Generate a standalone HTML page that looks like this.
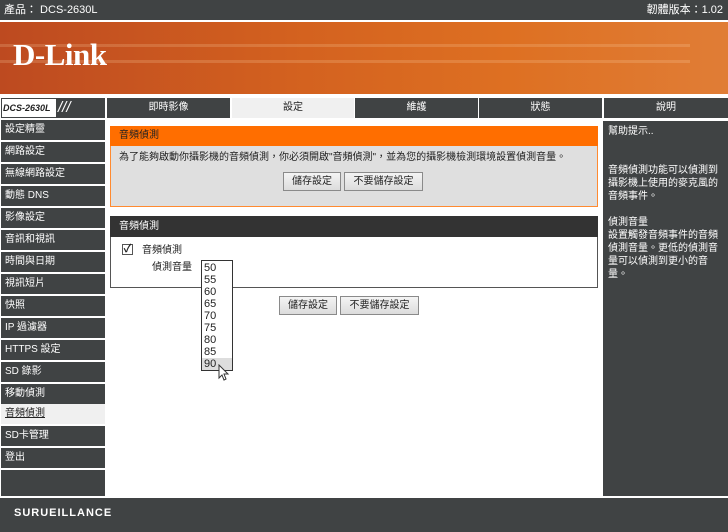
<!DOCTYPE html>
<html><head><meta charset="utf-8"><style>
*{margin:0;padding:0;box-sizing:border-box}
body{width:728px;height:532px;background:#fff;position:relative;overflow:hidden;font-family:"Liberation Sans","Noto Sans CJK TC",sans-serif;font-size:10px;color:#222;line-height:12px}
.a{position:absolute}
.dk{background:#404344;color:#fff}
.side div{position:absolute;left:1px;width:104px;height:20px;background:#404344;color:#fff;padding-left:4px;font-size:10px;line-height:20px}
.tab{position:absolute;top:98px;height:20px;background:#404344;color:#fff;text-align:center;font-size:10px;line-height:20px}
.btn{position:absolute;height:19px;background:linear-gradient(#f4f4f4,#dcdcdc);border:1px solid #8a8a8a;font-size:10px;text-align:center;line-height:17px;color:#222}
.opt{height:12px;line-height:12px;font-size:11px;padding-left:2px;color:#222}
</style></head><body>
<div class="a dk" style="left:0;top:0;width:728px;height:20px;font-size:11px;line-height:20px;padding-left:4px">產品： DCS-2630L<span style="position:absolute;right:5px;top:0">韌體版本：1.02</span></div>
<div class="a" style="left:0;top:22px;width:728px;height:72px;background:linear-gradient(90deg,#bd4a20 0%,#d3611f 40%,#de7022 70%,#e07d36 100%)">
<div class="a" style="left:0;top:22px;width:690px;height:3px;background:rgba(255,220,180,.2)"></div>
<div class="a" style="left:0;top:38px;width:690px;height:3px;background:rgba(255,220,180,.2)"></div>
<div class="a" style="left:13px;top:17px;color:#fff;font-family:'Liberation Serif',serif;font-weight:bold;font-size:31px;line-height:32px;letter-spacing:-0.5px">D-Link</div>
</div>
<div class="a" style="left:1px;top:98px;width:104px;height:20px;background:#404344"></div>
<div class="a" style="left:2px;top:99px;width:54px;height:18px;background:#fff;font-style:italic;font-weight:bold;font-size:9px;line-height:18px;padding-left:1px;color:#222;white-space:nowrap;overflow:hidden">DCS-2630L</div>
<div class="a" style="left:58px;top:99px;color:#fff;font-size:15px;font-style:italic;line-height:18px">///</div>
<div class="tab" style="left:107px;width:123px">即時影像</div>
<div class="tab" style="left:232px;width:122px;background:#f0f0f0;color:#222">設定</div>
<div class="tab" style="left:355px;width:123px">維護</div>
<div class="tab" style="left:479px;width:123px">狀態</div>
<div class="tab" style="left:604px;width:124px">說明</div>
<div class="side">
<div style="top:120px">設定精靈</div><div style="top:142px">網路設定</div><div style="top:164px">無線網路設定</div><div style="top:186px">動態 DNS</div><div style="top:208px">影像設定</div><div style="top:230px">音訊和視訊</div><div style="top:252px">時間與日期</div><div style="top:274px">視訊短片</div><div style="top:296px">快照</div><div style="top:318px">IP 過濾器</div><div style="top:340px">HTTPS 設定</div><div style="top:362px">SD 錄影</div><div style="top:384px">移動偵測</div><div style="top:404px;background:#f0f0f0;color:#222;text-decoration:underline">音頻偵測</div><div style="top:426px">SD卡管理</div><div style="top:448px">登出</div><div style="top:470px;height:26px"></div>
</div>
<div class="a" style="left:110px;top:126px;width:488px;height:81px;background:#dfdfdf;border:1px solid #ff8a30"></div>
<div class="a" style="left:110px;top:126px;width:488px;height:20px;background:#ff6e00;font-size:10px;line-height:20px;padding-left:9px;color:#222">音頻偵測</div>
<div class="a" style="left:119px;top:152px;font-size:10px">為了能夠啟動你攝影機的音頻偵測，你必須開啟"音頻偵測"，並為您的攝影機檢測環境設置偵測音量。</div>
<div class="btn" style="left:283px;top:172px;width:58px">儲存設定</div>
<div class="btn" style="left:344px;top:172px;width:79px">不要儲存設定</div>
<div class="a" style="left:110px;top:216px;width:488px;height:72px;border:1px solid #555"></div>
<div class="a" style="left:110px;top:216px;width:488px;height:21px;background:#333;color:#fff;line-height:22px;padding-left:9px">音頻偵測</div>
<div class="a" style="left:122px;top:244px;width:11px;height:11px;border:1px solid #555;background:#fff;font-size:11px;line-height:9px;text-align:center;font-weight:bold">✓</div>
<div class="a" style="left:142px;top:245px">音頻偵測</div>
<div class="a" style="left:152px;top:262px">偵測音量</div>
<div class="btn" style="left:279px;top:296px;width:58px">儲存設定</div>
<div class="btn" style="left:340px;top:296px;width:79px">不要儲存設定</div>
<div class="a" style="left:201px;top:260px;width:32px;height:111px;border:1px solid #333;background:#fff;padding-top:1px">
<div class="opt">50</div><div class="opt">55</div><div class="opt">60</div><div class="opt">65</div><div class="opt">70</div><div class="opt">75</div><div class="opt">80</div><div class="opt">85</div><div class="opt" style="background:#ddd">90</div></div>
<svg class="a" style="left:218px;top:364px" width="12" height="18" viewBox="0 0 12 18"><path d="M1 1 L1 14 L4 11 L6 16 L8 15 L6 10 L10 10 Z" fill="#fff" stroke="#333" stroke-width="1"/></svg>
<div class="a dk" style="left:603px;top:121px;width:125px;height:375px;padding:4px 10px 0 5px;font-size:10px;line-height:13px">幫助提示..<br><br><br>音頻偵測功能可以偵測到攝影機上使用的麥克風的音頻事件。<br><br>偵測音量<br>設置觸發音頻事件的音頻偵測音量。更低的偵測音量可以偵測到更小的音量。</div>
<div class="a dk" style="left:0;top:498px;width:728px;height:34px;line-height:30px;padding-left:14px;font-weight:bold;font-size:11px;letter-spacing:1px">SURUEILLANCE</div>
</body></html>
